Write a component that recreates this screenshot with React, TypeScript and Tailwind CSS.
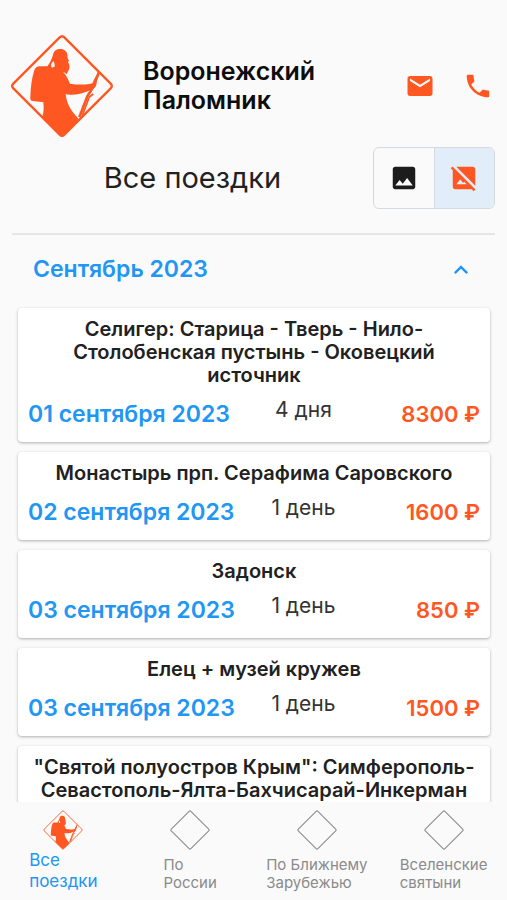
import { useState } from 'react';
import { MdEmail, MdExpandLess, MdHideImage, MdImage, MdPhone } from 'react-icons/md';

type Trip = {
    title: string;
    date?: string;
    duration?: string;
    price?: string;
};

const trips: Trip[] = [
    { title: 'Селигер: Старица - Тверь - Нило-\nСтолобенская пустынь - Оковецкий\nисточник', date: '01 сентября 2023', duration: '4 дня', price: '8300 ₽' },
    { title: 'Монастырь прп. Серафима Саровского', date: '02 сентября 2023', duration: '1 день', price: '1600 ₽' },
    { title: 'Задонск', date: '03 сентября 2023', duration: '1 день', price: '850 ₽' },
    { title: 'Елец + музей кружев', date: '03 сентября 2023', duration: '1 день', price: '1500 ₽' },
    { title: '"Святой полуостров Крым": Симферополь-\nСевастополь-Ялта-Бахчисарай-Инкерман' },
];

const tabs = ['Все\nпоездки', 'По\nРоссии', 'По Ближнему\nЗарубежью', 'Вселенские\nсвятыни'];

function Diamond({ className, filled }: { className: string; filled?: boolean }) {
    return (
        <svg viewBox="30 28 312 312" className={className} fill="none" aria-hidden="true">
            <path
                d="M179 38Q186 31 193 38L332 177Q339 184 332 191L193 330Q186 337 179 330L40 191Q33 184 40 177Z"
                stroke="currentColor"
                strokeWidth={filled ? 7 : 8}
            />
            {filled && (
                <>
                    {/* pilgrim with a backpack */}
                    <path
                        fill="currentColor"
                        fillRule="evenodd"
                        d="M159 90C162 78 170 73 180 73C192 73 200 79 202 89L203 101L207 108L204 113C210 121 210 131 206 137L200 148L189 141C200 152 205 166 210 177C229 180 249 181 268 178L277 176C281 168 284 160 289 152L294 158L290 170C291 184 285 191 274 195C250 206 222 213 197 209C200 235 211 256 231 277L236 285L193 329Q186 336 179 329L127 277C131 264 132 250 130 233L98 229C92 228 90 224 91 216C92 189 95 161 102 140C105 130 110 125 119 125L142 125C148 116 156 104 159 90ZM160 110C153 116 151 124 156 129L165 125C162 120 165 114 160 110Z"
                    />
                    {/* staff */}
                    <path stroke="currentColor" strokeWidth={8} d="M297 142L280 186L262 215L238 278" />
                    <path stroke="currentColor" strokeWidth={5} d="M280 208L268 217L247 272" />
                </>
            )}
        </svg>
    );
}

function TripCard({ trip }: { trip: Trip }) {
    return (
        <article className="rounded bg-white px-[10px] pt-[10px] pb-3 shadow-[0_1px_3px_rgba(0,0,0,0.3)]">
            <h3 className="text-center text-xl leading-[23px] font-semibold whitespace-pre-line text-[#212121]">
                {trip.title}
            </h3>
            {trip.date && (
                <div className="grid grid-cols-[15fr_9fr_8fr] pt-[7px] whitespace-nowrap">
                    <span className="pt-1 text-[23px] leading-8 font-semibold text-[#2196f3]">{trip.date}</span>
                    <span className="text-center text-[21px] leading-8 text-[#333333]">{trip.duration}</span>
                    <span className="pt-1 text-right text-[22px] leading-8 font-semibold text-[#ff5722]">{trip.price}</span>
                </div>
            )}
        </article>
    );
}

export default function App() {
    const [showImages, setShowImages] = useState(false);
    const [open, setOpen] = useState(true);
    const [activeTab, setActiveTab] = useState(0);

    return (
        <div className="flex h-dvh flex-col bg-[#fafafa] font-['Inter','Liberation_Sans',sans-serif]">
            <header className="px-3 pt-[34px]">
                <div className="-ml-0.5 flex items-center">
                    <Diamond filled className="size-[104px] shrink-0 text-[#ff5722]" />
                    <h1 className="grow pl-[29px] text-[25px] leading-[29px] font-semibold whitespace-pre-line text-[#0d0d0d]">
                        {'Воронежский\nПаломник'}
                    </h1>
                    <div className="flex gap-7 pr-0.5 text-[#ff5722]">
                        <a href="mailto:info@palomnik.ru" aria-label="Написать письмо">
                            <MdEmail size={30} />
                        </a>
                        <a href="tel:+74732000000" aria-label="Позвонить">
                            <MdPhone size={30} />
                        </a>
                    </div>
                </div>

                <div className="flex items-center pt-[9px]">
                    <h2 className="grow text-center text-[29px] text-[#212121]">Все поездки</h2>
                    <div className="flex h-[62px] w-[122px] overflow-hidden rounded-md border border-[#d5dadf]">
                        <button
                            className={`flex flex-1 items-center justify-center border-r border-[#d5dadf] ${showImages ? 'bg-[#e1eef9] text-[#ff5722]' : 'text-[#1c1c1c]'}`}
                            aria-label="С картинками"
                            aria-pressed={showImages}
                            onClick={() => setShowImages(true)}
                        >
                            <MdImage size={30} />
                        </button>
                        <button
                            className={`flex flex-1 items-center justify-center ${showImages ? 'text-[#1c1c1c]' : 'bg-[#e1eef9] text-[#ff5722]'}`}
                            aria-label="Без картинок"
                            aria-pressed={!showImages}
                            onClick={() => setShowImages(false)}
                        >
                            <MdHideImage size={30} />
                        </button>
                    </div>
                </div>

                <hr className="mt-6 border-t-2 border-[#e6e6e6]" />
            </header>

            <main className="flex min-h-0 grow flex-col overflow-y-auto pr-[17px] pl-[18px] [scrollbar-width:none]">
                <button
                    className="flex h-[73px] shrink-0 items-center justify-between px-[15px] pb-1 text-[23px] font-semibold text-[#2196f3]"
                    aria-expanded={open}
                    onClick={() => setOpen(!open)}
                >
                    Сентябрь 2023
                    <MdExpandLess size={28} className={open ? '' : 'rotate-180'} />
                </button>
                {open && (
                    <div className="flex flex-col gap-[10px]">
                        {trips.map((trip) => (
                            <TripCard key={trip.title} trip={trip} />
                        ))}
                    </div>
                )}
            </main>

            <nav className="grid h-[98px] shrink-0 grid-cols-4">
                {tabs.map((tab, i) => (
                    <button
                        key={tab}
                        className={`flex flex-col items-center pt-2 ${i === activeTab ? 'text-[#2196f3]' : 'text-[#8a8a8a]'}`}
                        onClick={() => setActiveTab(i)}
                    >
                        <Diamond filled={i === 0} className={`size-10 shrink-0 ${i === 0 ? 'text-[#ff5722]' : ''}`} />
                        <span className={`text-left whitespace-pre-line ${i === activeTab ? 'text-[17px] leading-[21px]' : 'pt-[6px] text-[15px] leading-[18px]'}`}>
                            {tab}
                        </span>
                    </button>
                ))}
            </nav>
        </div>
    );
}
